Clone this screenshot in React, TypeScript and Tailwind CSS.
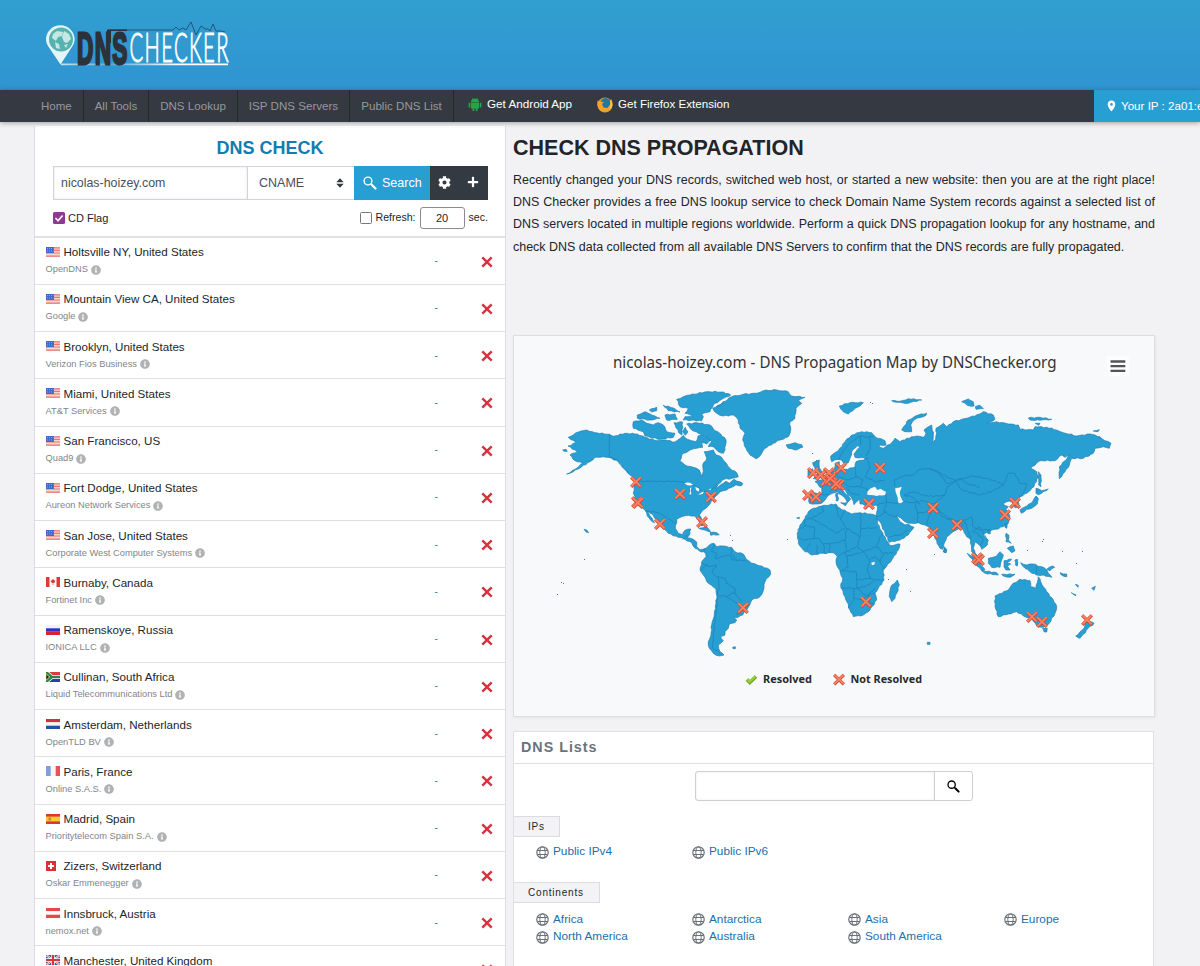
import React from "react";
import { FaCog, FaPlus, FaInfoCircle } from "react-icons/fa";
import { MdLocationOn } from "react-icons/md";

type Origin = [number, number];
const W: Origin = [550, 340];
const S: Origin = [550, 520];
const E: Origin = [780, 380];
const F: Origin = [930, 340];

// Each part holds an origin and points drawn at three units per map pixel.
function trace(parts: [Origin, string][], close = true): string {
  const pts = parts.flatMap(([o, s]) =>
    s.trim().split(/\s+/).map((p) => {
      const [x, y] = p.split(",").map(Number);
      return [o[0] + x / 3, o[1] + y / 3];
    })
  );
  const out: string[] = [];
  pts.forEach((p, i) => {
    out.push(`${i ? "L" : "M"}${p[0].toFixed(1)},${p[1].toFixed(1)}`);
    const n = pts[(i + 1) % pts.length];
    if (i === pts.length - 1 && !close) return;
    const dx = n[0] - p[0];
    const dy = n[1] - p[1];
    const len = Math.hypot(dx, dy);
    const steps = Math.floor(len / 2.4);
    for (let k = 1; k < steps; k++) {
      const w = Math.sin(p[0] * 3.1 + p[1] * 1.7 + k * 2.3) * 0.55;
      out.push(
        `L${(p[0] + (dx * k) / steps - (dy / len) * w).toFixed(1)},${(p[1] + (dy * k) / steps + (dx / len) * w).toFixed(1)}`
      );
    }
  });
  return out.join("") + (close ? "Z" : "");
}

const land: [Origin, string][][] = [
  [
    [W, "55,292 85,276 110,270 135,278 178,283 190,289 225,280 262,282 285,292 320,302 345,300 375,306 392,294 400,286 412,298 425,302 438,305 444,288 456,284 468,290 482,300 470,312 455,308 458,322 440,325 420,330 395,345 390,362 405,375 430,382 448,390 455,410 460,395 458,375 470,355 463,335 490,330 498,345 515,352 525,365 540,385 560,398 565,410 545,415 522,418 505,432 495,445 512,434 528,424 538,430 552,418 578,430 575,437 558,434 530,450 510,455 498,468 488,478 480,492 470,503 455,515 448,525 455,540 460,555 455,558 445,540 435,528 415,526 395,530 380,538 376,565 385,580 398,584 405,571 422,567 420,582 412,593 428,597 440,606 440,620 450,629 465,626"],
    [W, "468,634 455,636 435,625 425,608 405,598 385,592 355,580 340,565 325,545 305,522 290,512 300,528 314,548 308,546 292,528 285,510 270,497 258,480 250,460 252,440 258,420 240,405 222,385 205,365 185,355 160,350 135,352 120,365 95,380 70,395 50,402 75,388 98,370 75,362 60,345 82,335 54,318 78,308"],
  ],
  [[W, "38,330 48,328 52,334 42,334"]],
  [[S, "462,88 478,75 492,70 500,80 520,78 545,82 555,95 580,102 592,120 605,130 635,138 660,150 662,162 645,185 640,212 630,230 605,240 595,262 578,285 565,292 550,290 560,300 555,308 538,312 535,325 525,335 525,345 512,350 520,362 505,375 510,395 522,405 508,408 490,400 478,385 475,365 483,345 485,315 492,290 498,250 500,225 498,207 475,190 460,165 450,150 455,125 468,110"]],
  [[W, "488,205 520,190 500,200 545,170 580,163 620,160 640,152 680,150 715,155 725,168 765,172 745,182 755,190 738,205 735,235 720,245 722,270 715,290 690,300 670,310 645,325 632,345 618,356 600,345 588,325 578,300 585,280 570,265 565,240 550,225 520,228 500,220"]],
  [[W, "708,315 722,312 735,308 755,314 758,322 735,330 715,325"]],
  [[W, "380,178 400,170 420,165 470,155 520,156 542,165 515,178 490,195 480,215 455,222 460,230 455,242 400,240 405,230 430,228 405,220 415,205 390,200"]],
  [[W, "250,245 275,240 290,250 310,255 325,248 340,255 350,275 375,280 370,292 330,298 300,292 285,288 280,275 250,265"]],
  [[W, "262,225 285,215 300,222 315,228 330,235 300,240 262,235"]],
  [[W, "298,210 320,202 320,212 305,216"]],
  [[W, "340,196 370,204 390,216 355,212"]],
  [[W, "345,225 375,222 382,238 350,240"]],
  [[W, "372,248 398,246 396,285 386,278"]],
  [[W, "410,252 440,248 480,255 495,272 512,282 528,300 525,330 520,340 505,335 490,320 475,320 485,305 470,290 445,280 425,270"]],
  [[W, "398,275 406,262 414,276 406,286"]],
  [[W, "446,565 470,560 482,575 465,570"]],
  [[W, "480,578 500,578 508,584 482,586"]],
  [[S, "102,28 110,30 116,38 108,36"]],
  [[S, "548,382 556,380 556,386 549,386"]],
  [
    [E, "152,228 175,212 195,185 215,165 245,155 275,158 285,170 315,182 318,195 295,198 310,205 335,188 345,175 360,185 380,175 410,168 430,172 438,160 432,150 455,135 460,165 458,186 467,178 470,160 468,145 490,130 500,140 520,125 560,115 600,102"],
    [F, "160,215 190,225 195,238 170,250 200,245 235,252 265,255 270,268 310,270 315,260 350,262 380,270 400,278 440,288 480,282 510,290 525,302 543,310 538,325 520,320 495,325 490,340 460,355 425,355 418,375 405,395 388,416 388,380 420,345 405,352 395,345 375,362 330,362 302,385 320,395 324,410 312,440 290,460 270,470 262,482 268,500 255,503 245,485 230,485 218,492 235,500 228,508 240,530 235,550 205,567 185,570 175,575 165,580 160,585 175,600 172,615 155,628 148,615 135,605 130,625 140,645 148,655 138,655 125,635 122,600 110,590 100,570 92,560 75,572 50,590 45,605 38,628 30,625 15,595 5,570"],
    [E, "445,440 435,435 415,428 395,430 375,425 355,410 350,405 360,425 375,435 385,432 402,442 385,465 360,480 328,487 315,460 300,425 288,412 292,390 290,375 270,378 240,372 238,355 234,362 222,374 215,355 200,338 190,325 183,328 205,348 212,358 202,368 195,355 172,335 158,340 145,345 135,360 125,370 105,372 88,370 85,345 92,338 125,342 125,325 105,305 125,300 150,280 165,272 165,250 178,245 180,262 195,268 225,262 228,245 265,235 225,232 222,222 240,200 232,197 215,215 210,235 205,248 195,252 185,240 175,238 155,245"],
  ],
  [[E, "100,385 125,378 168,372 180,385 200,395 215,402 240,398 270,402 290,408 292,430 306,455 318,480 330,497 360,492 355,510 335,540 310,570 312,600 295,625 285,640 290,660 270,690 250,705 220,710 210,690 195,650 182,620 188,595 175,565 168,545 172,530 160,518 130,520 95,525 70,510 55,490 52,460 60,435 75,415 85,395"]],
  [[E, "352,600 358,615 350,640 345,655 335,665 328,650 332,622"]],
  [[E, "98,248 118,240 118,262 130,280 128,292 100,296 112,280 104,262"]],
  [[E, "84,272 98,266 98,285 84,290"]],
  [[E, "365,150 385,120 415,105 440,100 438,106 405,118 392,135 395,155 375,155"]],
  [[E, "178,78 210,68 250,68 240,78 225,85 205,102 190,95"]],
  [[E, "335,62 360,64 385,56 425,60 395,66 385,70 350,67"]],
  [[E, "168,340 174,340 174,362 168,362"]],
  [[E, "182,368 202,368 196,378"]],
  [[E, "492,500 500,508 498,518 490,516"]],
  [[E, "442,787 450,787 450,793 442,793"]],
  [[E, "50,414 58,412 58,416"]],
  [[F, "95,185 115,177 130,185 132,198 112,196"]],
  [[F, "136,200 150,196 160,206 138,208"]],
  [[F, "295,234 330,232 365,238 330,241 300,240"]],
  [[F, "316,250 330,250 326,256"]],
  [[F, "490,273 508,269 504,275"]],
  [[F, "325,395 333,405 333,440 326,435"]],
  [[F, "270,510 290,498 306,488 318,468 325,475 322,492 305,505 290,508 274,520"]],
  [[F, "318,460 318,445 335,452 355,447 335,460 325,464"]],
  [[F, "225,552 232,550 230,565 225,562"]],
  [[F, "172,572 182,570 180,582 173,580"]],
  [[F, "228,580 236,585 235,600 244,610 228,605"]],
  [[F, "232,625 250,618 255,632 245,638"]],
  [[F, "112,640 130,650 150,672 165,690 155,692 135,670"]],
  [[F, "155,692 200,698 205,705 165,700"]],
  [[F, "215,703 255,703 240,712 220,708"]],
  [[F, "175,655 200,648 210,635 220,645 215,660 210,682 185,682 175,670"]],
  [[F, "222,662 245,658 230,668 242,672 232,678 240,690 228,690 222,680"]],
  [[F, "255,660 262,658 262,678 257,676"]],
  [[F, "272,668 290,675 310,672 345,685 355,700 365,712 340,705 320,705 300,695 285,685"]],
  [[F, "350,688 368,678 374,682 360,692"]],
  [[F, "390,698 410,702 410,710 394,705"]],
  [[F, "436,733 445,736 444,742"]],
  [[F, "424,758 438,764 436,768"]],
  [[F, "485,745 496,739 492,751"]],
  [[F, "195,768 235,750 245,735 270,718 300,722 302,740 318,745 325,710 340,740 350,755 370,780 380,800 375,820 358,850 340,862 320,858 305,835 285,830 260,815 235,822 205,830 195,800"]],
  [[F, "338,865 352,865 350,876 343,876"]],
  [[F, "470,840 492,850 475,865 450,895 437,888 460,868"]],
  [[F, "42,628 50,630 48,638 42,636"]],
];

const borders: [Origin, string][] = [
  [W, "178,283 178,352"],
  [W, "178,352 200,358 215,378 235,398"],
  [W, "258,424 390,424 410,430 440,440 460,455 490,445 500,432"],
  [W, "286,512 325,518 350,532 378,552"],
  [S, "398,58 412,45"],
  [S, "455,130 480,140 500,135 486,155 500,170 525,175 530,190 555,205 558,225 575,245"],
  [S, "492,72 485,95 500,100 495,115 520,110 540,105 545,120 590,122"],
  [S, "545,85 542,102 560,118"],
  [S, "452,150 475,130"],
  [S, "505,172 508,200 502,225 530,230 555,215"],
  [S, "503,230 500,260 495,300 490,350 488,385 510,398"],
  [S, "530,230 570,255 580,262 560,285"],
  [E, "175,240 190,210 215,185 240,168 262,172 285,168"],
  [E, "240,168 242,195"],
  [E, "268,172 272,205 258,228"],
  [E, "225,262 228,290 205,300 175,290 165,275"],
  [E, "228,290 250,300 240,320 205,320 195,310"],
  [E, "262,240 270,262 255,290 285,305 315,300"],
  [E, "240,320 260,325 262,338"],
  [E, "200,322 215,340 240,345"],
  [E, "150,282 140,300 158,318 150,335"],
  [E, "92,338 95,365"],
  [E, "125,342 148,346"],
  [E, "345,318 342,300 370,288 400,285 415,270 445,265 475,275 500,290 525,302"],
  [E, "525,302 545,295 560,310 600,322"],
  [E, "525,302 500,325 495,345 460,350 430,345 400,335 372,345"],
  [E, "370,365 400,368 430,362 460,372 495,345"],
  [E, "372,345 395,350 420,372"],
  [E, "292,375 318,365 345,370 372,366"],
  [E, "318,345 320,365 312,395 340,410 352,408"],
  [E, "292,410 320,395"],
  [E, "328,470 360,465 385,450"],
  [E, "405,370 412,400 415,428"],
  [E, "412,400 440,395 465,375 480,395 500,410 530,425 550,420"],
  [E, "440,436 445,410 465,375"],
  [F, "0,385 30,402 50,430 80,425 100,415 130,408 165,415 195,422 220,435 235,400 255,400 270,430 292,432 282,455 262,482"],
  [F, "80,428 95,450 150,465 185,455 220,435"],
  [F, "0,500 25,510 35,530 75,545 105,540 125,530 130,560 150,570 180,568"],
  [F, "95,560 105,545 115,575 125,600"],
  [F, "125,575 145,580 160,600 150,615"],
  [F, "130,570 150,562 172,600"],
  [F, "319,675 319,705"],
  [E, "125,378 130,395 95,415 78,418"],
  [E, "95,415 130,435 170,460 198,440"],
  [E, "168,375 172,400 182,420 198,440"],
  [E, "182,420 190,395"],
  [E, "75,418 75,438 52,450"],
  [E, "75,438 103,440 103,475 70,480 55,470"],
  [E, "242,400 243,445 292,444"],
  [E, "243,445 240,470 200,445"],
  [E, "200,445 195,480 170,488 130,492 115,475 103,475"],
  [E, "240,470 232,500 250,515 290,500 300,470 310,460"],
  [E, "195,480 200,515 230,500"],
  [E, "130,492 135,520"],
  [E, "110,495 112,522"],
  [E, "90,490 80,510"],
  [E, "150,490 148,518"],
  [E, "175,530 195,515 200,530 250,515"],
  [E, "200,530 205,560 180,575"],
  [E, "250,515 268,540 262,570 270,595 230,600 228,575 188,572"],
  [E, "268,540 285,530 300,545 312,568"],
  [E, "290,500 310,520 340,518"],
  [E, "310,520 300,545"],
  [E, "270,595 290,600 312,600"],
  [E, "230,600 232,625 182,624"],
  [E, "232,625 255,620 280,605"],
  [E, "222,628 222,655 205,685"],
  [E, "222,655 245,660 265,645 285,640"],
  [E, "232,625 260,650 285,625"],
  [E, "265,645 270,672 282,670"],
];

const waters: [Origin, string][] = [
  [E, "262,335 272,325 285,320 292,330 302,326 318,335 315,345 290,348 262,344"],
  [E, "346,324 365,320 360,334 362,350 370,365 356,370 350,345"],
  [E, "274,548 284,545 284,553 276,556"],
  [W, "403,430 420,428 430,435 412,436"],
  [W, "420,445 424,442 424,462 418,464"],
  [W, "436,440 448,446 446,455 438,450"],
  [W, "444,464 462,454 458,462"],
  [W, "468,450 484,445 482,450"],
];

const specks: [number, number][] = [
  [561, 582], [563, 583], [557, 594], [584, 559], [787, 539], [812, 453], [816, 460], [910, 591], [906, 569], [888, 579],
  [934, 554], [1042, 541], [1043, 539], [1027, 550], [1062, 551], [1082, 551], [1076, 563], [730, 535], [732, 540], [870, 402], [872, 403],
];

const marks: [number, number][] = [
  [636, 482], [637, 502], [638, 503], [680, 494], [711, 497], [660, 524], [702, 522], [743, 608], [813, 473], [821, 475],
  [826, 481], [832, 476], [829, 473], [830, 479], [841, 468], [839, 485], [836, 484], [808, 495], [816, 497], [880, 468], [869, 504], [933, 508],
  [933, 533], [957, 525], [1015, 503], [1005, 515], [977, 558], [979, 560], [866, 602], [1032, 617], [1042, 622], [1087, 620],
];

function Cross() {
  return (
    <g fill="none">
      <path d="M-4.800 -4.600L4.800 4.900M4.800 -4.600L-4.800 4.900" stroke="#cf4a36" strokeWidth="3.300" />
      <path d="M-4.800 -4.900L4.600 4.400M4.700 -4.900L-4.700 4.400" stroke="#fb8163" strokeWidth="2" />
    </g>
  );
}

function WorldMap() {
  return (
    <svg viewBox="514 336 640 380" className="block h-full w-full">
      <rect x="1107" y="356" width="22" height="20" fill="#fcfdfe" />
      <path d="M1110.500 361.500h14.800M1110.500 366.200h14.800M1110.500 370.900h14.800" stroke="#555" strokeWidth="2.300" />
      <text x="613" y="368.300" fontFamily="Noto Sans, sans-serif" fontSize="16" fill="#333" textLength="443.500" lengthAdjust="spacingAndGlyphs">
        nicolas-hoizey.com - DNS Propagation Map by DNSChecker.org
      </text>
      <g fill="#289fd3" stroke="#2380b0" strokeWidth="0.700" strokeLinejoin="round">
        {land.map((p, i) => (
          <path key={i} d={trace(p)} />
        ))}
      </g>
      <g fill="none" stroke="#1d83b6" strokeWidth="0.800">
        {borders.map((p, i) => (
          <path key={i} d={trace([p], false)} />
        ))}
      </g>
      <g fill="#f8f9fb">
        {waters.map((p, i) => (
          <path key={i} d={trace([p])} />
        ))}
      </g>
      {specks.map(([x, y], i) => (
        <rect key={i} x={x} y={y} width="1" height="1" fill="#3d7fa3" />
      ))}
      {marks.map(([x, y], i) => (
        <g key={i} transform={`translate(${x} ${y})`}>
          <Cross />
        </g>
      ))}
      <path d="M747 679.500l2.800 3L756 676.500" fill="none" stroke="#6aa523" strokeWidth="3.500" />
      <path d="M747.400 679.300l2.400 2.400 5.700-5.500" fill="none" stroke="#98cf35" strokeWidth="2.200" />
      <g transform="translate(839 679.500)">
        <Cross />
      </g>
      <g fontFamily="Noto Sans, sans-serif" fontSize="11.300" fontWeight="700" fill="#262a2e">
        <text x="763" y="683.300" textLength="49" lengthAdjust="spacingAndGlyphs">Resolved</text>
        <text x="850.500" y="683.300" textLength="71.500" lengthAdjust="spacingAndGlyphs">Not Resolved</text>
      </g>
    </svg>
  );
}

function Flag({ code }: { code: string }) {
  const bands = (a: string, b: string, c: string) => (
    <>
      <rect width="14" height="3.300" fill={a} />
      <rect y="3.300" width="14" height="3.400" fill={b} />
      <rect y="6.700" width="14" height="3.300" fill={c} />
    </>
  );
  return (
    <svg viewBox="0 0 14 10" className="h-[10px] w-[14px] shrink-0">
      {code === "us" && (
        <>
          <rect width="14" height="10" fill="#f6d5d3" />
          <path d="M0 .8h14M0 3.400h14M0 6h14M0 9.200h14" stroke="#e8766f" strokeWidth="1.200" />
          <rect width="8" height="6" fill="#4269c5" />
          <path d="M1 1.600h6.500M1 4h6.500" stroke="#9db4ec" strokeWidth=".8" strokeDasharray="1 1" />
        </>
      )}
      {code === "ca" && (
        <>
          <rect width="14" height="10" fill="#fff" />
          <path d="M0 0h3.500v10H0zM10.500 0H14v10h-3.500z" fill="#dd3b36" />
          <path d="M7 1.800l1 1.500 1.400.2-.9 2.200-1.200.4V8h-.6V6.100l-1.200-.4-.9-2.200L6 3.300z" fill="#dd3b36" />
        </>
      )}
      {code === "ru" && bands("#f2f2f2", "#2a32c8", "#d8232a")}
      {code === "nl" && bands("#d4303b", "#f4f4f4", "#2652a3")}
      {code === "at" && bands("#e8474b", "#fff", "#e8474b")}
      {code === "es" && (
        <>
          <rect width="14" height="10" fill="#d93a2b" />
          <rect y="2.600" width="14" height="4.800" fill="#f6cb35" />
          <rect x="2.500" y="3.400" width="2.500" height="3" fill="#c98335" />
        </>
      )}
      {code === "za" && (
        <>
          <rect width="14" height="5" fill="#e0393b" />
          <rect y="5" width="14" height="5" fill="#2b3fa8" />
          <path d="M0 0l6 5h8M0 10l6-5" stroke="#fff" strokeWidth="4" fill="none" />
          <path d="M0 0l6 5h8M0 10l6-5" stroke="#23894d" strokeWidth="2.400" fill="none" />
          <path d="M0 2l3.500 3L0 8z" fill="#222" stroke="#e8b93a" strokeWidth=".6" />
        </>
      )}
      {code === "fr" && (
        <>
          <rect width="14" height="10" fill="#f7f5f7" />
          <rect width="4.700" height="10" fill="#7fa0dc" />
          <rect x="9.700" width="4.300" height="10" fill="#e4554e" />
        </>
      )}
      {code === "ch" && (
        <>
          <rect width="10" height="10" fill="#dc2f35" />
          <path d="M5 2v6M2 5h6" stroke="#fff" strokeWidth="2" />
        </>
      )}
      {code === "gb" && (
        <>
          <rect width="14" height="10" fill="#3a53a8" />
          <path d="M0 0l14 10M14 0L0 10" stroke="#fff" strokeWidth="2" />
          <path d="M0 0l14 10M14 0L0 10" stroke="#d9454d" strokeWidth=".8" />
          <path d="M7 0v10M0 5h14" stroke="#fff" strokeWidth="3.400" />
          <path d="M7 0v10M0 5h14" stroke="#d9353d" strokeWidth="2" />
        </>
      )}
    </svg>
  );
}

const servers = [
  ["us", "Holtsville NY, United States", "OpenDNS"],
  ["us", "Mountain View CA, United States", "Google"],
  ["us", "Brooklyn, United States", "Verizon Fios Business"],
  ["us", "Miami, United States", "AT&T Services"],
  ["us", "San Francisco, US", "Quad9"],
  ["us", "Fort Dodge, United States", "Aureon Network Services"],
  ["us", "San Jose, United States", "Corporate West Computer Systems"],
  ["ca", "Burnaby, Canada", "Fortinet Inc"],
  ["ru", "Ramenskoye, Russia", "IONICA LLC"],
  ["za", "Cullinan, South Africa", "Liquid Telecommunications Ltd"],
  ["nl", "Amsterdam, Netherlands", "OpenTLD BV"],
  ["fr", "Paris, France", "Online S.A.S."],
  ["es", "Madrid, Spain", "Prioritytelecom Spain S.A."],
  ["ch", "Zizers, Switzerland", "Oskar Emmenegger"],
  ["at", "Innsbruck, Austria", "nemox.net"],
  ["gb", "Manchester, United Kingdom", ""],
];

function SearchIcon({ className }: { className: string }) {
  return (
    <svg viewBox="0 0 14 14" className={className} fill="none" stroke="currentColor">
      <circle cx="5" cy="5" r="3.900" strokeWidth="1.400" />
      <path d="M7.800 7.800l1.600 1.600" strokeWidth="1.300" />
      <path d="M9.200 9.200l3.300 3.300" strokeWidth="2.200" strokeLinecap="round" />
    </svg>
  );
}

function Globe() {
  return (
    <svg viewBox="0 0 13 13" className="h-[13px] w-[13px] shrink-0" fill="none" stroke="#6a7178" strokeWidth="1">
      <circle cx="6.500" cy="6.500" r="5.700" strokeWidth="1.200" />
      <ellipse cx="6.500" cy="6.500" rx="2.700" ry="5.700" />
      <path d="M1.300 4.500h10.400M1.300 8.500h10.400" />
    </svg>
  );
}

function Links({ items }: { items: string[] }) {
  return (
    <div className="grid w-[646px] grid-cols-4 pl-[22px]">
      {items.map((t) => (
        <a key={t} className="flex h-[17.300px] items-center gap-1 text-[11.800px] text-[#1a6fb0]">
          <Globe />
          <span className="-mt-px">{t}</span>
        </a>
      ))}
    </div>
  );
}

function Logo() {
  return (
    <svg viewBox="0 0 190 50" className="h-[50px] w-[190px] overflow-visible">
      <defs>
        <linearGradient id="base" x1="0" x2="1">
          <stop offset="0" stopColor="#fff" stopOpacity=".7" />
          <stop offset=".3" stopColor="#fff" stopOpacity=".2" />
          <stop offset=".7" stopColor="#fff" />
        </linearGradient>
      </defs>
      <path d="M15.500 44.500L5 29C2.600 25.600 1 23 1 19.500a14.300 14.300 0 0 1 28.600 0c0 3.500-1.600 6.100-4 9.500z" fill="#e4f5f9" />
      <circle cx="16" cy="19.500" r="12" fill="#54b3af" />
      <path d="M8 14l4-3 6 1-1 4-4 1-2 4-4-3zM19 11l5 3 2 5-4 4-3-1-2-5zM10 22l4 2 1 5-4-1zM19 25l4-1-2 4z" fill="#c5e8e4" />
      <path d="M16 43.500h167v1.700H16z" fill="url(#base)" />
      <path d="M64 10h64l3-3 3 3 4-2 3 2 5-8 5 13 5-9 4 3h3l2 2 3-7 3 7h5l4 1" fill="none" stroke="#1f4560" strokeWidth=".8" />
      <text transform="translate(32 44) scale(.51 1)" fontFamily="Liberation Sans, sans-serif" fontWeight="700" fontSize="44.500" fill="#2c323a" stroke="#2c323a" strokeWidth="2.800" textLength="99">DNS</text>
      <path d="M62 9.500h20v1.600H66v12h-4z" fill="#2c323a" />
      <text transform="translate(84.500 41.700) scale(.5 1)" fontFamily="Lato, sans-serif" fontWeight="300" fontSize="40.500" fill="#fff" stroke="#fff" strokeWidth="1" textLength="198">CHECKER</text>
    </svg>
  );
}

export default function App() {
  return (
    <div className="h-[966px] w-[1200px] overflow-hidden bg-[#f2f2f5] text-[#212529] [font-family:'Liberation_Sans',Arial,sans-serif]">
      <header className="h-[90px] bg-gradient-to-b from-[#319fcf] to-[#3094d2] pl-[45px] pt-[20px]">
        <Logo />
      </header>
      <nav className="relative flex h-[32px] bg-[#353a42] text-[11.500px] text-[#95989d] shadow-[0_1px_5px_rgba(0,0,0,0.35)]">
        <div className="w-[84px] shrink-0 border-r border-[#25292e] pl-[41px] leading-[32px]">Home</div>
        <div className="w-[65px] shrink-0 border-r border-[#25292e] text-center leading-[32px]">All Tools</div>
        <div className="w-[89px] shrink-0 border-r border-[#25292e] text-center text-[11.600px] leading-[32px]">DNS Lookup</div>
        <div className="w-[112px] shrink-0 border-r border-[#25292e] text-center text-[11.600px] leading-[32px]">ISP DNS Servers</div>
        <div className="w-[104px] shrink-0 border-r border-[#25292e] text-center text-[11.600px] leading-[32px]">Public DNS List</div>
        <div className="flex w-[143px] shrink-0 items-start pl-[14px] text-[11.700px] leading-[28px] text-white">
          <svg viewBox="0 0 14 15" className="mr-[5px] mt-[7px] h-[15px] w-[14px]">
            <path d="M3 5a4 3.500 0 0 1 8 0zM3 5.600h8v6H9.500V14h-1.800v-2.400H6.300V14H4.500v-2.400H3zM.6 5.800h1.700v4.700H.6zM11.700 5.800h1.700v4.700h-1.700z" fill="#25a548" />
            <path d="M4.200.8l1 1.500M9.800.8l-1 1.500" stroke="#25a548" strokeWidth=".6" />
          </svg>
          Get Android App
        </div>
        <div className="flex shrink-0 items-start text-[11.600px] leading-[28px] text-white">
          <svg viewBox="0 0 16 16" className="mr-[5px] mt-[7px] h-[16px] w-[16px]">
            <circle cx="8" cy="8" r="7.500" fill="#f0972a" />
            <circle cx="8.500" cy="6.200" r="5.300" fill="#2476a9" />
            <path d="M.7 3.500L3 4.500l4 .5-2 2 1.500 3.500 4 .5 3-4 .5-5c2.500 3 2 8-1 10.500S4 15 2 12 0 6 .7 3.500z" fill="#f3a22e" />
            <path d="M13 2.500c2.500 3 3 7 .5 10 0-3 0-7-.5-10z" fill="#f9d04a" />
          </svg>
          Get Firefox Extension
        </div>
        <div className="ml-auto flex w-[106px] shrink-0 items-center overflow-hidden whitespace-nowrap bg-[#289fd3] pl-[11px] text-[11.600px] text-white">
          <MdLocationOn className="mr-[3px] h-[14px] w-[13px] shrink-0" />
          Your IP : 2a01:e0a
        </div>
      </nav>
      <main className="flex">
        <section className="ml-[34px] mt-[4px] h-[840px] w-[472px] shrink-0 overflow-hidden border-x border-[#dcdde0] bg-white">
          <div className="h-[111.600px] border-b-2 border-[#e0e1e3] px-[18px]">
            <h2 className="pt-[12px] text-center text-[18px] font-bold leading-[21px] text-[#107db0]">DNS CHECK</h2>
            <div className="mt-[7px] flex h-[34px] w-[435px] text-[12.500px] text-[#495057]">
              <div className="flex w-[195px] items-center border border-[#ced4da] pl-[7px] text-[12.400px] shadow-[inset_0_0_3px_rgba(0,0,0,0.1)]">nicolas-hoizey.com</div>
              <div className="flex w-[106px] items-center justify-between border-y border-[#ced4da] pl-[11px] pr-[10px]">
                CNAME
                <svg viewBox="0 0 8 10" className="h-[10px] w-[8px]">
                  <path d="M4 .2L7.700 4.200H.3zM4 9.800L.3 5.800h7.400z" fill="#343a40" />
                </svg>
              </div>
              <div className="flex w-[76px] items-center bg-[#289fd3] pl-[9px] text-white">
                <SearchIcon className="mr-[5px] h-[14px] w-[14px]" />
                Search
              </div>
              <div className="flex w-[58px] items-center justify-between bg-[#343a42] pb-[2px] pl-[8px] pr-[9px] text-white">
                <FaCog className="h-[13px] w-[13px]" />
                <FaPlus className="h-[12px] w-[12px]" />
              </div>
            </div>
            <div className="mt-[6px] flex h-[24px] w-[435px] items-center text-[11px]">
              <svg viewBox="0 0 12 12" className="mr-[3px] h-[12px] w-[12px]">
                <rect width="12" height="12" rx="1.500" fill="#8d3b92" />
                <path d="M2.500 6l2.500 2.700 4.600-5.200" fill="none" stroke="#fff" strokeWidth="1.600" />
              </svg>
              CD Flag
              <span className="ml-auto mr-[4px] h-[12px] w-[12px] rounded-[1.500px] border border-[#767680]" />
              <span className="text-[10.600px]">Refresh:</span>
              <span className="ml-[4px] mr-[4px] flex h-[22px] w-[45px] items-center justify-center rounded-[3px] border border-[#8b8b90]">20</span>
              <span className="text-[10.600px]">sec.</span>
            </div>
          </div>
          {servers.map(([code, place, org], i) => (
            <div key={i} className="flex h-[47.250px] items-center border-b border-[#dee0e2] pl-[10.500px]">
              <div className="w-[389px]">
                <div className="flex items-center gap-[4px] text-[11.600px] leading-[17px]">
                  <Flag code={code} />
                  {place}
                </div>
                <div className="mt-px flex h-[17px] items-center gap-[3px] text-[9.300px] leading-[17px] text-[#7f858b]">
                  {org}
                  {org && <FaInfoCircle className="h-[10px] w-[10px] text-[#b1b2b4]" />}
                </div>
              </div>
              <span className="w-[46px] text-[10px] text-[#2f83a6]">-</span>
              <svg viewBox="0 0 12 12" className="mt-[2px] h-[12px] w-[12px]">
                <path d="M1.300 1.300l9.400 9.400M10.700 1.300L1.300 10.700" stroke="#d4343f" strokeWidth="2.400" />
              </svg>
            </div>
          ))}
        </section>
        <section className="ml-[7px] w-[642px]">
          <h1 className="mt-[13px] text-[21.500px] font-bold leading-[26px]">CHECK DNS PROPAGATION</h1>
          <p className="mt-[8px] h-[166px] text-justify text-[12.480px] leading-[22.200px]">
            Recently changed your DNS records, switched web host, or started a new website: then you are at the right place! DNS Checker provides a free DNS lookup service to check Domain Name System records against a selected list of DNS servers located in multiple regions worldwide. Perform a quick DNS propagation lookup for any hostname, and check DNS data collected from all available DNS Servers to confirm that the DNS records are fully propagated.
          </p>
          <div className="h-[382px] w-[642px] border border-[#dcdee1] bg-[#f8f9fb] shadow-[1px_1px_3px_rgba(0,0,0,0.06)]">
            <WorldMap />
          </div>
          <div className="mt-[14px] h-[300px] w-[641px] border border-[#dee0e3] bg-white">
            <h3 className="h-[32px] border-b border-[#dee0e3] pl-[7px] text-[14.300px] font-bold leading-[30px] tracking-[1px] text-[#6a737b]">DNS Lists</h3>
            <div className="ml-[181px] mt-[7px] flex h-[30px] w-[278px] rounded-[3px] border border-[#ccd0d4]">
              <div className="w-[239px] border-r border-[#ccd0d4] shadow-[inset_0_0_3px_rgba(0,0,0,0.08)]" />
              <div className="flex flex-1 items-center justify-center text-black">
                <SearchIcon className="h-[13px] w-[13px]" />
              </div>
            </div>
            <div className="mt-[15px] flex h-[21px] w-[46px] items-center border border-l-0 border-[#dadce2] bg-[#f3f3f6] pl-[14px] text-[10px] tracking-[0.800px]">IPs</div>
            <div className="mt-[7px]">
              <Links items={["Public IPv4", "Public IPv6"]} />
            </div>
            <div className="mt-[21px] flex h-[21px] w-[86px] items-center border border-l-0 border-[#dadce2] bg-[#f3f3f6] pl-[14px] text-[10px] tracking-[0.800px]">Continents</div>
            <div className="mt-[8px]">
              <Links items={["Africa", "Antarctica", "Asia", "Europe", "North America", "Australia", "South America"]} />
            </div>
          </div>
        </section>
      </main>
    </div>
  );
}
